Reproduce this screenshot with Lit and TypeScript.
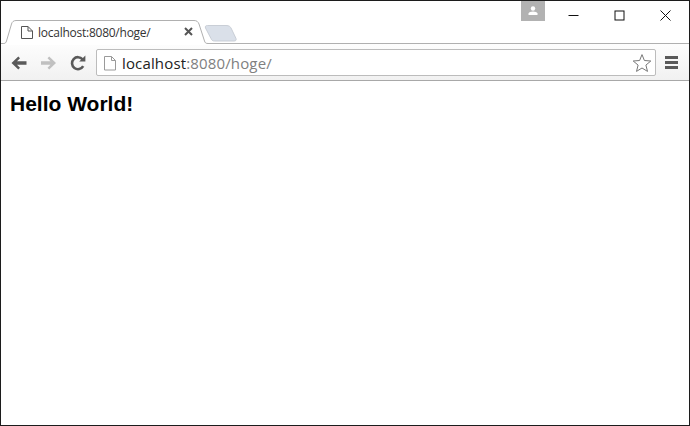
import { LitElement, html, css } from "lit";
import { customElement } from "lit/decorators.js";

@customElement("app-root")
export class AppRoot extends LitElement {
  static styles = css`
    :host { display: flex; flex-direction: column; width: 690px; height: 426px; box-sizing: border-box; border: 1px solid #1c1c1c; background: #fff; overflow: hidden; font-family: "Open Sans", "Liberation Sans", sans-serif; }
    .strip { position: relative; height: 43px; flex: none; box-sizing: border-box; display: flex; justify-content: flex-end; background: #fff; border-bottom: 1px solid #b0b0b0; padding-right: 1px; }
    .strip-art { position: absolute; left: -1px; top: -1px; }
    .tab-title { position: absolute; left: 37px; top: 24px; font-size: 12px; line-height: 16px; color: #333; letter-spacing: -0.25px; white-space: nowrap; }
    .avatar { width: 24px; height: 20px; background: #b2b2b2; display: flex; align-items: center; justify-content: center; margin-right: 5px; }
    .win { width: 46px; height: 29px; display: flex; align-items: center; justify-content: center; padding-bottom: 1px; box-sizing: border-box; }
    .toolbar { height: 37px; flex: none; box-sizing: border-box; display: flex; align-items: center; background: linear-gradient(#fdfdfd, #f1f1f1); border-bottom: 1px solid #a8a8a8; padding: 1px 0 0 8px; }
    .btn { width: 20px; height: 20px; display: block; flex: none; }
    .nav { display: flex; gap: 9px; margin-right: 8px; }
    .back { margin-right: 1px; }
    .omni { width: 560px; height: 27px; box-sizing: border-box; flex: none; border: 1px solid #bcbcbc; border-radius: 2px; background: #fff; display: flex; align-items: center; padding: 0 3px 0 6px; }
    .url { font-size: 15px; line-height: 20px; letter-spacing: 0.15px; color: #808080; margin-left: 5px; flex: 1; white-space: nowrap; }
    .url b { font-weight: 400; color: #222; }
    .menu { margin-left: 8px; }
    .page { flex: 1; padding: 10px 9px; }
    h1 { margin: 0; font: bold 21px/26px "Liberation Sans", Arial, sans-serif; color: #000; }
  `;

  render() {
    return html`
      <div class="strip">
        <svg class="strip-art" width="260" height="45" viewBox="0 0 260 45">
          <path d="M1 43.5H3.5C5.5 43.5 6 42.5 6.5 41L11.5 24C12 22 13.5 20.5 16 20.5H194C196.5 20.5 198 21.5 199 24L204.5 41C205 42.5 205.5 43.5 208 43.5H260V45H1Z" fill="#fff" stroke="none"/>
          <path d="M1 43.5H3.5C5.5 43.5 6 42.5 6.5 41L11.5 24C12 22 13.5 20.5 16 20.5H194C196.5 20.5 198 21.5 199 24L204.5 41C205 42.5 205.5 43.5 208 43.5H260" fill="none" stroke="#b0b0b0" stroke-width="1"/>
          <path d="M207.5 25.5H226C229 25.5 230.5 26.5 231.5 29L236 38.5C236.5 40 236 41 234 41H214.5C212.5 41 211.5 40 211 38.5L205.5 28C205 26.5 205.5 25.5 207.5 25.5Z" fill="#dae0e9" stroke="#c9ced6" stroke-width="1"/>
          <path d="M21.5 26.5H28L32.5 31V38.5H21.5Z M28 26.5V31H32.5" fill="#fff" stroke="#555" stroke-width="1"/>
          <path d="M185 28L192 35M192 28L185 35" stroke="#555" stroke-width="2" fill="none"/>
        </svg>
        <span class="tab-title">localhost:8080/hoge/</span>
        <div class="avatar">
          <svg width="14" height="14" viewBox="0 0 14 14"><circle cx="7" cy="4.5" r="2.2" fill="#fff"/><path d="M2.5 11V9.6C2.5 8.4 5 7.6 7 7.6S11.5 8.4 11.5 9.6V11Z" fill="#fff"/></svg>
        </div>
        <div class="win"><svg width="11" height="11" viewBox="0 0 11 11"><path d="M0.5 5.5H10.5" stroke="#111" stroke-width="1"/></svg></div>
        <div class="win"><svg width="11" height="11" viewBox="0 0 11 11"><rect x="1" y="1" width="9" height="9" fill="none" stroke="#111"/></svg></div>
        <div class="win"><svg width="11" height="11" viewBox="0 0 11 11"><path d="M0.5 0.5L10.5 10.5M10.5 0.5L0.5 10.5" stroke="#111" stroke-width="1"/></svg></div>
      </div>
      <div class="toolbar">
        <div class="nav">
          <svg class="btn back" viewBox="0 0 20 20"><path d="M18 8.2H8.5L11.5 5.2L9.8 3.6L3 10L9.8 16.4L11.5 14.8L8.5 11.8H18Z" fill="#5a5a5a" transform="translate(-0.5 0)"/></svg>
          <svg class="btn" viewBox="0 0 20 20"><path d="M2 8.2H11.5L8.5 5.2L10.2 3.6L17 10L10.2 16.4L8.5 14.8L11.5 11.8H2Z" fill="#c0c0c0"/></svg>
          <svg class="btn" viewBox="0 0 20 20"><path d="M15.2 13.2A6 6 0 1 1 14.6 6.3" fill="none" stroke="#5a5a5a" stroke-width="2.6"/><path d="M11.2 8.6H17.4V2.4Z" fill="#5a5a5a"/></svg>
        </div>
        <div class="omni">
          <svg width="14" height="18" viewBox="0 0 14 18"><path d="M1.5 2.5H8.5L12.5 6.5V16H1.5Z" fill="#fff" stroke="#9a9a9a"/><path d="M8.5 2.5V6.5H12.5" fill="none" stroke="#9a9a9a"/></svg>
          <span class="url"><b>localhost</b>:8080/hoge/</span>
          <svg width="20" height="20" viewBox="0 0 20 20"><path d="M10 1.6L12.4 7.5L18.8 8L13.9 12.1L15.5 18.4L10 15L4.5 18.4L6.1 12.1L1.2 8L7.6 7.5Z" fill="#fff" stroke="#777" stroke-width="1"/></svg>
        </div>
        <svg class="menu" width="15" height="16" viewBox="0 0 15 16"><path d="M1 2.5H14M1 7.5H14M1 12.5H14" stroke="#5a5a5a" stroke-width="3"/></svg>
      </div>
      <div class="page"><h1>Hello World!</h1></div>
    `;
  }
}
